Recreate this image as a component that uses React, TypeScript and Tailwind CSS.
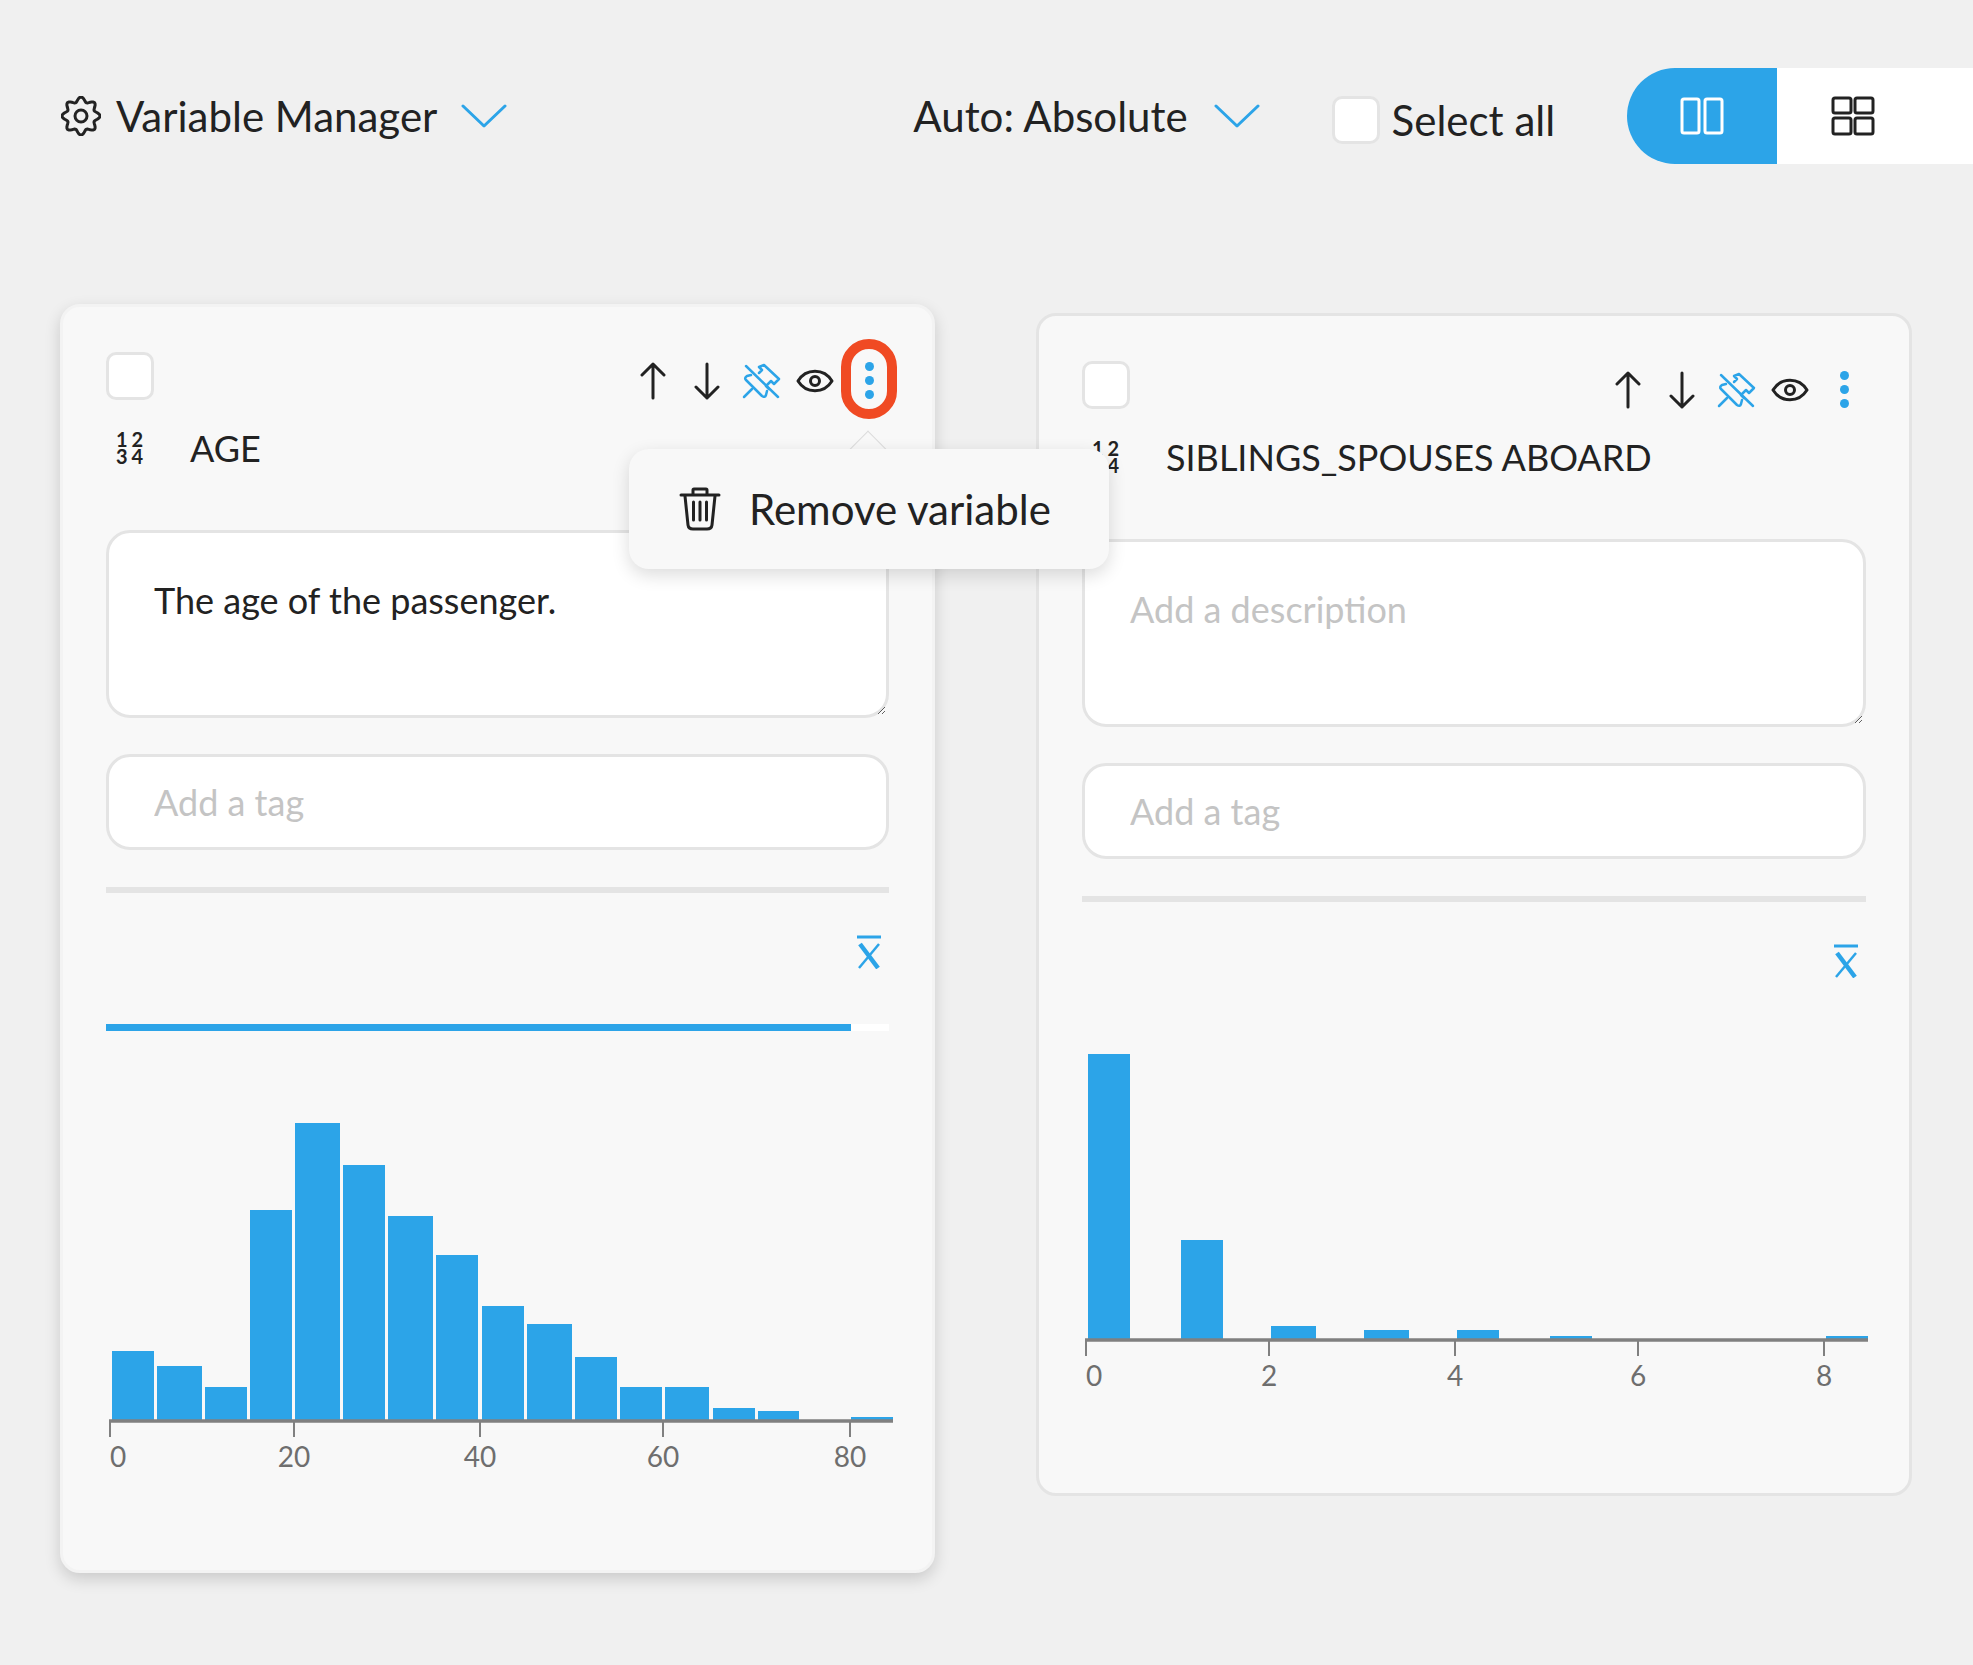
import React from 'react';

const blue = '#2ca4e8';

// wavy 8-tooth outline for the settings gear
const gearPath = (() => {
  const pts: string[] = [];
  for (let i = 0; i < 96; i++) {
    const a = (i / 96) * Math.PI * 2 - Math.PI / 2;
    const r = 16.6 + 2.4 * Math.cos(a * 8 + Math.PI * 4);
    pts.push(`${(20 + r * Math.cos(a)).toFixed(2)} ${(20 + r * Math.sin(a)).toFixed(2)}`);
  }
  return `M${pts.join('L')}Z`;
})();

const GearIcon = () => (
  <svg width="40" height="40" viewBox="0 0 40 40" fill="none" stroke="#222" strokeWidth="3" strokeLinejoin="round">
    <path d={gearPath} />
    <circle cx="20" cy="20" r="6" />
  </svg>
);

const Chevron = () => (
  <svg width="46" height="26" viewBox="0 0 46 26" fill="none" stroke={blue} strokeWidth="3" strokeLinecap="round" strokeLinejoin="round">
    <path d="M2 3 L23 23 L44 3" />
  </svg>
);

const ArrowUp = () => (
  <svg width="26" height="38" viewBox="0 0 26 38" fill="none" stroke="#222" strokeWidth="3" strokeLinecap="round" strokeLinejoin="round">
    <path d="M13 36 V2 M2 13 L13 2 L24 13" />
  </svg>
);

const ArrowDown = () => (
  <svg width="26" height="38" viewBox="0 0 26 38" fill="none" stroke="#222" strokeWidth="3" strokeLinecap="round" strokeLinejoin="round">
    <path d="M13 2 V36 M2 25 L13 36 L24 25" />
  </svg>
);

const PinOff = () => (
  <svg width="50" height="50" viewBox="0 0 50 50" fill="none" stroke={blue} strokeWidth="2.500" strokeLinecap="round" strokeLinejoin="round">
    <path d="M10 10 L42 41" />
    <path d="M8 41 L16 33" />
    <path d="M15 19 L11 20 Q8 22 10 24 L26 40 Q29 42 30 39 L31 35" />
    <path d="M23 17 L26 14 L23 11 L28 9 L43 23 L38 28 L35 25 L30 30 L33 33" />
  </svg>
);

const EyeIcon = () => (
  <svg width="38" height="24" viewBox="0 0 38 24" fill="none" stroke="#222" strokeWidth="3" strokeLinejoin="round">
    <path d="M2 12 C10 -1 28 -1 36 12 C28 25 10 25 2 12 Z" />
    <circle cx="19" cy="12" r="4.500" />
  </svg>
);

const TrashIcon = () => (
  <svg width="42" height="44" viewBox="0 0 42 44" fill="none" stroke="#222" strokeWidth="3" strokeLinecap="round" strokeLinejoin="round">
    <path d="M2 8 H40" />
    <path d="M14 7 V3 Q14 2 15 2 H27 Q28 2 28 3 V7" />
    <path d="M6 9 L9 38 Q9.500 42 14 42 H28 Q32.500 42 33 38 L36 9" />
    <path d="M14.500 15 V33 M21 15 V33 M27.500 15 V33" />
  </svg>
);

const Columns = () => (
  <svg width="44" height="38" viewBox="0 0 44 38" fill="none" stroke="#fff" strokeWidth="3" strokeLinejoin="round">
    <rect x="2" y="2" width="17" height="34" rx="2" />
    <rect x="25" y="2" width="17" height="34" rx="2" />
  </svg>
);

const GridIcon = () => (
  <svg width="44" height="40" viewBox="0 0 44 40" fill="none" stroke="#222" strokeWidth="3" strokeLinejoin="round">
    <rect x="2" y="2" width="18" height="15" rx="2" />
    <rect x="24" y="2" width="18" height="15" rx="2" />
    <rect x="2" y="22" width="18" height="16" rx="2" />
    <rect x="24" y="22" width="18" height="16" rx="2" />
  </svg>
);

const MeanIcon = () => (
  <svg width="26" height="34" viewBox="0 0 26 34" fill="none" stroke={blue}>
    <path d="M1 2 H25" strokeWidth="3" />
    <path d="M4 9 L22 33" strokeWidth="4.500" />
    <path d="M23 9 L3 33" strokeWidth="2.500" />
  </svg>
);

const Checkbox = () => (
  <div className="w-[48px] h-[48px] shrink-0 rounded-[10px] bg-white border-[3px] border-[#e4e4e4]" />
);

type Bar = [number, number, number]; // x start, x end, height

type ChartProps = {
  bars: Bar[];
  ticks: { x: number; label: string }[];
  baseline: number;
  height: number;
  axisEnd: number;
  shift?: string;
};

const Chart = ({ bars, ticks, baseline, height, axisEnd, shift }: ChartProps) => (
  <svg width="781" height={height} className={`block overflow-visible ${shift ?? ''}`}>
    {bars.map(([a, b, h], i) => (
      <rect key={i} x={a} y={baseline - h} width={b - a} height={h} fill={blue} />
    ))}
    <line x1={ticks[0].x - 1} x2={axisEnd} y1={baseline} y2={baseline} stroke="#808080" strokeWidth="3.500" />
    {ticks.map((t, i) => (
      <g key={t.label}>
        <line x1={t.x} x2={t.x} y1={baseline} y2={baseline + 16} stroke="#808080" strokeWidth="2" />
        <text
          x={t.x}
          y={baseline + 46}
          fontSize="28"
          fill="#6e6e6e"
          textAnchor={i === 0 ? 'start' : 'middle'}
          fontFamily="Lato, sans-serif"
        >
          {t.label}
        </text>
      </g>
    ))}
  </svg>
);

const ageBars: Bar[] = [
  [5, 47, 70], [50, 95, 55], [98, 140, 34], [143, 185, 211], [188, 233, 298], [236, 278, 256],
  [281, 326, 205], [329, 371, 166], [375, 417, 115], [420, 465, 97], [468, 510, 64], [513, 555, 34],
  [558, 602, 34], [606, 648, 13], [651, 692, 10], [744, 786, 4],
];
const ageTicks = [
  { x: 3, label: '0' }, { x: 187, label: '20' }, { x: 373, label: '40' }, { x: 556, label: '60' }, { x: 743, label: '80' },
];
const sibBars: Bar[] = [
  [6, 48, 286], [99, 141, 100], [189, 234, 14], [282, 327, 10], [375, 417, 10], [468, 510, 4], [744, 786, 4],
];
const sibTicks = [
  { x: 4, label: '0' }, { x: 187, label: '2' }, { x: 373, label: '4' }, { x: 556, label: '6' }, { x: 742, label: '8' },
];

const Toolbar = ({ highlighted }: { highlighted?: boolean }) => (
  <div className={`ml-auto mt-[5px] h-[47px] flex items-center ${highlighted ? '-mr-[7px]' : '-mr-[5px]'}`}>
    <div className="w-[54px] flex justify-center"><ArrowUp /></div>
    <div className="w-[54px] flex justify-center"><ArrowDown /></div>
    <div className="w-[54px] flex justify-center"><PinOff /></div>
    <div className="w-[54px] flex justify-center"><EyeIcon /></div>
    <div className="relative w-[54px] flex flex-col items-center gap-[5px]">
      <span className="w-[9px] h-[9px] rounded-full bg-[#2ca4e8]" />
      <span className="w-[9px] h-[9px] rounded-full bg-[#2ca4e8]" />
      <span className="w-[9px] h-[9px] rounded-full bg-[#2ca4e8]" />
      {highlighted && (
        <div className="absolute left-[-1px] top-[-23px] w-[56px] h-[80px] rounded-[28px] border-[10px] border-[#f04a23]" />
      )}
    </div>
  </div>
);

const Popover = () => (
  <div className="absolute left-[566px] top-[142px] z-20 w-[480px] h-[120px]">
    <div className="absolute left-[226px] top-[-13px] w-[26px] h-[26px] rotate-45 bg-[#f8f8f8] border-t border-l border-[#dcdcdc]" />
    <div className="relative h-full flex items-center pl-[50px] rounded-[20px] bg-[#f8f8f8] shadow-[0_6px_18px_rgba(0,0,0,0.14)]">
      <TrashIcon />
      <span className="ml-[28px] text-[42px] text-[#222]">Remove variable</span>
    </div>
  </div>
);

type CardProps = {
  name: string;
  description?: string;
  className: string;
  active?: boolean;
  chart: ChartProps;
};

const VariableCard = ({ name, description, className, active, chart }: CardProps) => (
  <section className={`relative shrink-0 px-[43px] pt-[45px] rounded-[20px] bg-[#f8f8f8] border-[3px] ${className}`}>
    <div className="flex items-start">
      <Checkbox />
      <Toolbar highlighted={active} />
    </div>
    <div className="mt-[25px] h-[38px] flex items-center">
      <div className="w-[84px] pl-[10px] font-bold text-[20px] leading-[17px] tracking-[4px] text-[#222]">
        12
        <br />
        34
      </div>
      <span className="text-[36px] text-[#222]">{name}</span>
    </div>
    <textarea
      defaultValue={description}
      placeholder="Add a description"
      className="mt-[63px] block w-full h-[188px] px-[45px] py-[45px] rounded-[24px] bg-white border-[3px] border-[#e4e4e4] text-[36px] leading-[44px] text-[#222] placeholder:text-[#c4c4c4] outline-none"
    />
    <input
      placeholder="Add a tag"
      className="mt-[36px] block w-full h-[96px] px-[45px] rounded-[24px] bg-white border-[3px] border-[#e4e4e4] text-[36px] text-[#222] placeholder:text-[#c4c4c4] outline-none"
    />
    <div className="mt-[37px] h-[6px] bg-[#e4e4e4]" />
    <div className="mt-[42px] h-[34px] flex justify-end pr-[7px]">
      <MeanIcon />
    </div>
    <div className="mt-[55px] h-[7px] flex">
      {active && (
        <>
          <div className="w-[745px] bg-[#2ca4e8]" />
          <div className="flex-1 bg-white" />
        </>
      )}
    </div>
    <Chart {...chart} />
    <div className="h-[94px]" />
    {active && <Popover />}
  </section>
);

export default function App() {
  return (
    <div className="min-h-[1665px] bg-[#f0f0f0] font-['Lato',sans-serif]">
      <header className="pt-[68px] pl-[61px] h-[164px] flex items-center text-[42px] text-[#222]">
        <GearIcon />
        <span className="ml-[15px]">Variable Manager</span>
        <span className="ml-[24px]"><Chevron /></span>
        <span className="ml-[406px]">Auto: Absolute</span>
        <span className="ml-[26px]"><Chevron /></span>
        <div className="ml-[72px] mt-[8px] flex items-center">
          <Checkbox />
          <span className="ml-[12px]">Select all</span>
        </div>
        <div className="ml-auto h-[96px] w-[346px] flex">
          <div className="w-[150px] rounded-l-[48px] bg-[#2ca4e8] flex items-center justify-center">
            <Columns />
          </div>
          <div className="flex-1 bg-white flex items-center pl-[54px]">
            <GridIcon />
          </div>
        </div>
      </header>
      <main className="mt-[140px] pl-[60px] flex items-start gap-[101px]">
        <VariableCard
          name="AGE"
          description="The age of the passenger."
          className="w-[875px] z-10 border-[#f3f3f3] shadow-[0_6px_16px_rgba(0,0,0,0.16)]"
          active
          chart={{ bars: ageBars, ticks: ageTicks, baseline: 390, height: 445, axisEnd: 786, shift: 'ml-px' }}
        />
        <VariableCard
          name="SIBLINGS_SPOUSES ABOARD"
          className="w-[876px] mt-[9px] border-[#e4e4e4]"
          chart={{ bars: sibBars, ticks: sibTicks, baseline: 300, height: 359, axisEnd: 786 }}
        />
      </main>
    </div>
  );
}
